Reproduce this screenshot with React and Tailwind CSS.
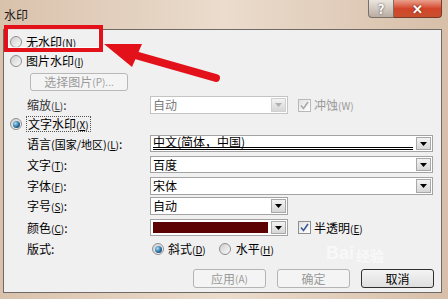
import React from 'react';

const font = { fontFamily: '"Noto Sans CJK SC", "Noto Sans", sans-serif' };

const Key = ({ k }) => (
  <span className="text-[10px]">
    (<span className="underline">{k}</span>)
  </span>
);

const Radio = ({ checked }) => (
  <div className="flex h-[12px] w-[12px] shrink-0 items-center justify-center rounded-full border border-[#8f8f8f] bg-gradient-to-br from-[#cfcfcf] to-[#fafafa]">
    {checked && (
      <div className="h-[7px] w-[7px] rounded-full bg-[radial-gradient(circle_at_35%_35%,#a8dcf8,#2a6e9e_55%,#0b2c48)]" />
    )}
  </div>
);

const Check = ({ disabled }) => (
  <div
    className={`flex h-[13px] w-[13px] shrink-0 items-center justify-center border bg-gradient-to-br from-[#e2e2e2] to-white ${
      disabled ? 'border-[#b9b9b9]' : 'border-[#8f8f8f]'
    }`}
  >
    <svg width="9" height="9" viewBox="0 0 9 9">
      <path
        d="M1 4.5 L3.5 7.5 L8 1"
        fill="none"
        stroke={disabled ? '#a9a9a9' : '#3d5a98'}
        strokeWidth="1.6"
      />
    </svg>
  </div>
);

const Select = ({ className, disabled, children }) => (
  <div
    className={`flex h-full border bg-white ${
      disabled ? 'border-[#c4c4c4]' : 'border-[#a3a3a3]'
    } ${className}`}
  >
    <div className="flex min-w-0 flex-1 items-center px-[2px]">{children}</div>
    <div
      className={`m-px flex w-[15px] items-center justify-center border bg-gradient-to-b from-[#f3f3f3] to-[#d6d6d6] ${
        disabled ? 'border-[#d0d0d0]' : 'border-[#a8a8a8]'
      }`}
    >
      <svg width="7" height="4" viewBox="0 0 7 4">
        <path d="M0 0 H7 L3.5 4 Z" fill={disabled ? '#b0b0b0' : '#000'} />
      </svg>
    </div>
  </div>
);

const Btn = ({ disabled, def, children }) => (
  <div
    className={`flex h-[19px] w-[73px] items-center justify-center rounded-[3px] border text-[12px] ${
      disabled
        ? 'border-[#b4b4b4] bg-[#f4f4f4] text-[#9a9a9a]'
        : def
        ? 'border-[#2f2f2f] bg-gradient-to-b from-[#f4f4f4] to-[#dedede] text-black'
        : 'border-[#707070] bg-gradient-to-b from-[#f4f4f4] to-[#dedede] text-black'
    }`}
  >
    {children}
  </div>
);

const Row = ({ label, mt, h, children }) => (
  <div className={`flex items-center pl-[23px] ${mt} ${h}`}>
    <div className="w-[123px] shrink-0">{label}</div>
    {children}
  </div>
);

export default function App() {
  return (
    <div
      className="relative flex h-[299px] w-[448px] flex-col overflow-hidden bg-gradient-to-r from-[#d9c2ac] via-[#ebdccd] to-[#d7bfa9] text-[12px] leading-none text-black"
      style={font}
    >
      {/* title bar */}
      <div className="flex h-[29px] shrink-0 items-start">
        <div className="pl-[4px] pt-[9px] text-[12px] text-[#1a1a1a]">水印</div>
        <div className="ml-auto mr-[6px] flex">
          <div className="flex h-[18px] w-[26px] items-center justify-center rounded-bl-[4px] border border-t-0 border-[#7a6f66] bg-gradient-to-b from-[#ece6e0] to-[#b9aca1] text-[13px] font-bold text-white [text-shadow:0_0_2px_#333]">
            ?
          </div>
          <div className="flex h-[18px] w-[48px] items-center justify-center rounded-br-[4px] border border-l-0 border-t-0 border-[#7a3a2a] bg-gradient-to-b from-[#e9a08c] via-[#d2452a] to-[#c8502e] text-[13px] font-bold text-white [text-shadow:0_0_2px_#5a1a0a]">
            ✕
          </div>
        </div>
      </div>

      {/* client area */}
      <div className="ml-[3px] flex h-[264px] w-[439px] flex-col border border-[#6f6a66] bg-[#f0f0f0] pt-[3px]">
        <div className="flex h-[18px] items-center gap-[4px] pl-[6px]">
          <Radio />
          <span>
            无水印<Key k="N" />
          </span>
        </div>
        <div className="mt-px flex h-[18px] items-center gap-[4px] pl-[6px]">
          <Radio />
          <span>
            图片水印<Key k="I" />
          </span>
        </div>
        <div className="mt-[3px] pl-[26px]">
          <div className="flex h-[18px] w-[98px] items-center justify-center rounded-[3px] border border-[#b8b8b8] bg-[#f4f4f4] text-[#9a9a9a]">
            选择图片
            <span className="text-[10px]">(P)...</span>
          </div>
        </div>
        <Row mt="mt-[5px]" h="h-[18px]" label={<span className="text-[#333]">缩放<Key k="L" />:</span>}>
          <Select disabled className="w-[138px]">
            <span className="text-[#7a7a7a]">自动</span>
          </Select>
          <div className="ml-[10px] flex items-center gap-[3px] text-[#9a9a9a]">
            <Check disabled />
            <span>
              冲蚀<span className="text-[10px]">(W)</span>
            </span>
          </div>
        </Row>
        <div className="mt-px flex h-[18px] items-center gap-[4px] pl-[6px]">
          <Radio checked />
          <span className="border border-dotted border-[#555] px-px py-px">
            文字水印<Key k="X" />
          </span>
        </div>
        <Row mt="mt-[2px]" h="h-[17px]" label={<span>语言<span className="text-[11px]">(国家/地区)</span><Key k="L" />:</span>}>
          <Select className="w-[283px]">
            <div className="flex h-[13px] w-full items-center border-b-[3px] border-double border-black">
              中文(简体，中国)
            </div>
          </Select>
        </Row>
        <Row mt="mt-[4px]" h="h-[17px]" label={<span>文字<Key k="T" />:</span>}>
          <Select className="w-[283px]">百度</Select>
        </Row>
        <Row mt="mt-[4px]" h="h-[18px]" label={<span>字体<Key k="F" />:</span>}>
          <Select className="w-[283px]">宋体</Select>
        </Row>
        <Row mt="mt-[2px]" h="h-[18px]" label={<span>字号<Key k="S" />:</span>}>
          <Select className="w-[138px]">自动</Select>
        </Row>
        <Row mt="mt-[4px]" h="h-[17px]" label={<span>颜色<Key k="C" />:</span>}>
          <Select className="w-[138px]">
            <div className="h-[11px] w-full bg-[#5c0202]" />
          </Select>
          <div className="ml-[10px] flex items-center gap-[3px]">
            <Check />
            <span>
              半透明<Key k="E" />
            </span>
          </div>
        </Row>
        <Row mt="mt-[4px]" h="h-[18px]" label={<span>版式:</span>}>
          <div className="ml-[2px] flex items-center gap-[4px]">
            <Radio checked />
            <span>
              斜式<Key k="D" />
            </span>
          </div>
          <div className="ml-[13px] flex items-center gap-[5px]">
            <Radio />
            <span>
              水平<Key k="H" />
            </span>
          </div>
        </Row>
        <div className="mt-[11px] flex justify-end gap-[11px] pr-[7px]">
          <Btn disabled>
            应用<span className="text-[10px]">(A)</span>
          </Btn>
          <Btn disabled>确定</Btn>
          <Btn def>取消</Btn>
        </div>
      </div>

      {/* faint site watermark */}
      <div className="pointer-events-none absolute left-[326px] top-[244px] flex items-end gap-[2px] text-[18px] font-bold text-white/60">
        <span style={{ fontFamily: '"Liberation Sans", sans-serif' }}>Bai</span>
        <span className="text-[14px]">经验</span>
      </div>

      {/* red highlight box */}
      <div className="pointer-events-none absolute left-[4px] top-[25px] h-[27px] w-[99px] border-[4px] border-[#e3121a]">
        <div className="h-full w-full border border-white/80" />
      </div>

      {/* red arrow */}
      <svg className="pointer-events-none absolute left-0 top-0" width="448" height="299">
        <line x1="216" y1="78" x2="128" y2="53" stroke="#e3121a" strokeWidth="8" strokeLinecap="round" />
        <polygon points="104,44 142,44 132,67" fill="#e3121a" />
      </svg>
    </div>
  );
}
